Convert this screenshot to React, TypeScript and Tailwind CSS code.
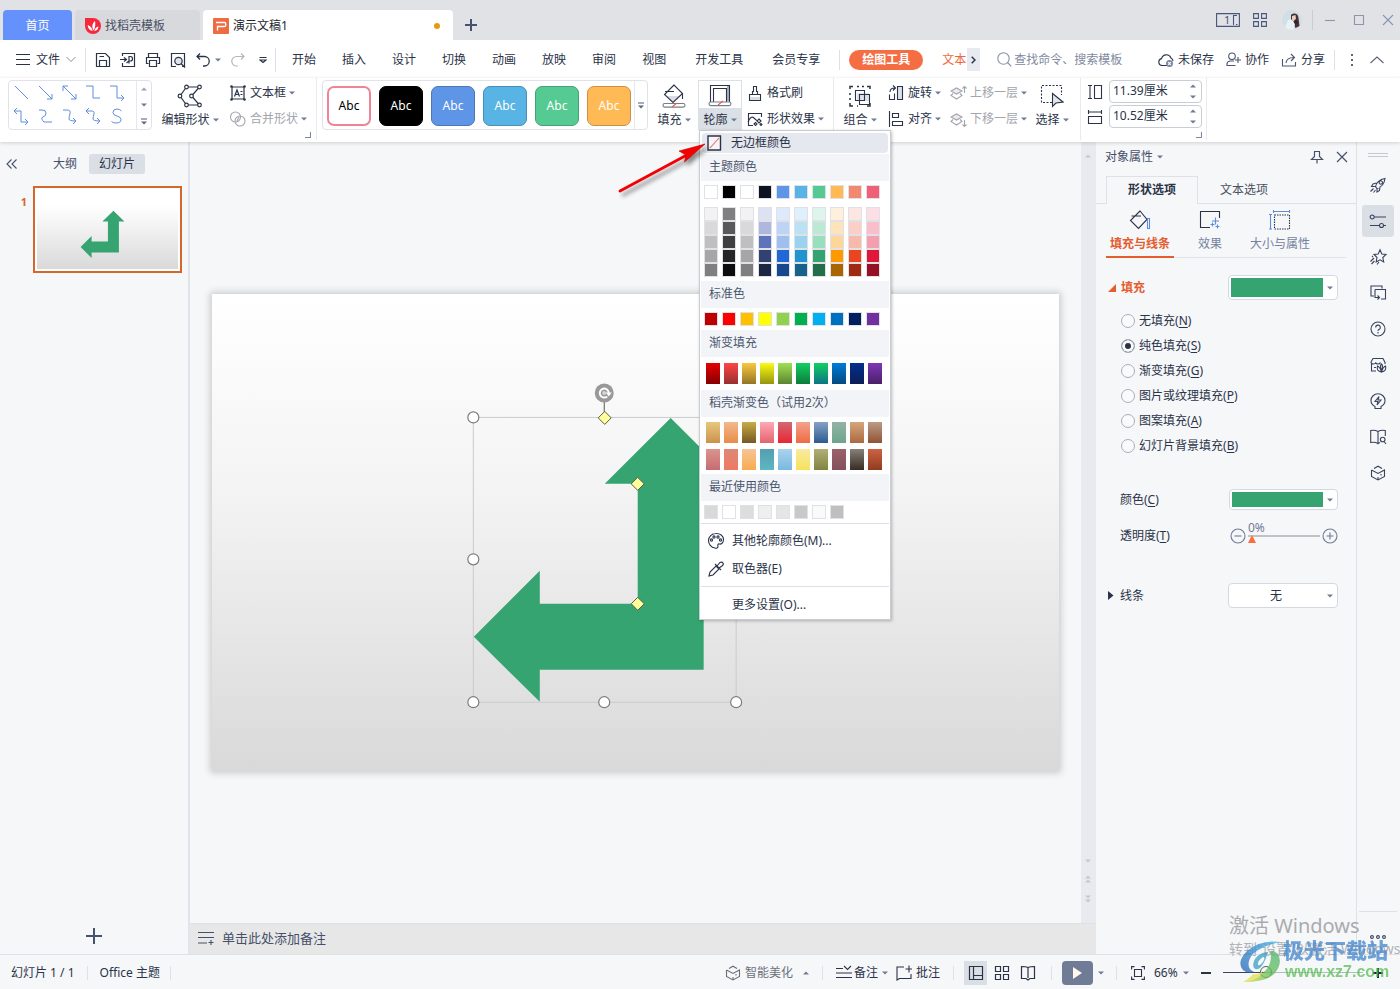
import React from "react";

type Kids = { children?: React.ReactNode };

function Ico({ w = 16, h = 16, sw = 1.1, className = "", children }: Kids & { w?: number; h?: number; sw?: number; className?: string }) {
  return (
    <svg width={w} height={h} viewBox={`0 0 ${w} ${h}`} fill="none" stroke="currentColor" strokeWidth={sw} className={`shrink-0 ${className}`} aria-hidden="true">
      {children}
    </svg>
  );
}

function Caret({ up = false, className = "text-[#6f7b96]" }: { up?: boolean; className?: string }) {
  return (
    <svg width="6" height="4" viewBox="0 0 6 4" className={`shrink-0 ${className}`} aria-hidden="true">
      <path d={up ? "M0 3.5L3 .5L6 3.5Z" : "M0 .5H6L3 3.5Z"} fill="currentColor" />
    </svg>
  );
}

const ARROW = "M459 124L393 190H426V310H328V277L262 343L328 408V376H492V190H525Z";

/* ---------- title bar ---------- */

function TitleBar() {
  return (
    <header className="flex h-10 shrink-0 items-end bg-[#e1e2e6] pl-[3px]">
      <button className="h-[30px] w-[69px] rounded-t bg-[#6591fc] pt-px text-white">首页</button>
      <button className="ml-[3px] flex h-[30px] w-[125px] items-center gap-1 rounded-t bg-[#d8d9dd] pt-px pl-[10px] text-[#4a5064]">
        <svg width="16" height="16" viewBox="0 0 16 16" className="shrink-0" aria-hidden="true">
          <path d="M0 0H8A8 8 0 1 1 0 8Z" fill="#f5283c" />
          <path d="M8.6 12.5C6.5 9.5 7 5.500 10 3C10.600 6 10.400 9.500 8.600 12.500Z" fill="#fff" />
          <path d="M7.600 13C4.500 12.500 2.700 10.200 2.700 7C5.500 8 7.200 10 7.600 13ZM9.200 13C9.800 10.500 11.300 9 13.500 8.400C13.300 11 11.800 12.600 9.200 13Z" fill="#fff" />
        </svg>
        找稻壳模板
      </button>
      <button className="ml-[3px] flex h-[30px] w-[250px] items-center gap-1 rounded-t bg-white pt-px pr-[13px] pl-[10px] text-[#23262e]">
        <svg width="16" height="16" viewBox="0 0 16 16" className="shrink-0" aria-hidden="true">
          <rect width="16" height="16" rx="1" fill="#ee6c43" />
          <path d="M3 4.500H11.500Q12.800 4.500 12.800 6V7Q12.800 8.500 11.500 8.500H4.500V12.500" fill="none" stroke="#fff" strokeWidth="1.3" />
        </svg>
        演示文稿1
        <span className="ml-auto size-[6px] rounded-full bg-[#e69a0c]" />
      </button>
      <button aria-label="新建" className="flex h-[30px] w-9 items-center justify-center text-[#46536f]">
        <Ico w={12} h={12} sw={2}><path d="M6 0V12M0 6H12" /></Ico>
      </button>
      <div className="ml-auto flex h-10 items-center pr-[6px] text-[#47567a]">
        <button aria-label="窗口布局" className="mr-[13px]">
          <Ico w={24} h={14}>
            <path d="M.6.6H23.400V13.400H.600ZM17.500 2.500V11.500M17 2.500H21M17 11.500H18M20 11.500H21.500" />
            <text x="8" y="11" fontSize="11" fill="currentColor" stroke="none">1</text>
          </Ico>
        </button>
        <button aria-label="应用" className="mr-[15px]">
          <Ico w={14} h={14}><path d="M.6.6H5.400V5.400H.600ZM8.600.6H13.400V5.400H8.600ZM.6 8.600H5.400V13.400H.600ZM8.600 8.600H13.400V13.400H8.600Z" /></Ico>
        </button>
        <button aria-label="账户" className="mr-[10px]">
          <svg width="20" height="20" viewBox="0 0 20 20" aria-hidden="true">
            <circle cx="10" cy="10" r="10" fill="#cfdfe6" />
            <path d="M9 5C11 2.500 16.500 3 16.500 8L17.500 16L13.500 18L9 10Z" fill="#4a3035" />
            <path d="M10 6L13.500 5L14 9.500L11.500 11.500L10 9.500Z" fill="#f0cdb9" />
            <path d="M3 17L6 10L10 9.500L13 14L12 19.500C9 20.500 6 20 3 17Z" fill="#e6f2f4" />
            <path d="M13 9L16 12L13.500 15L12 12Z" fill="#2b2633" />
          </svg>
        </button>
        <span className="mr-[11px] h-5 w-px bg-[#c9ccd4]" />
        <div className="flex gap-[17px] text-[#8a95b0]">
          <button aria-label="最小化"><Ico w={12} h={12}><path d="M1 6.500H11" /></Ico></button>
          <button aria-label="最大化"><Ico w={12} h={12}><path d="M1.500 1.500H10.500V10.500H1.500Z" /></Ico></button>
          <button aria-label="关闭"><Ico w={12} h={12}><path d="M1 1L11 11M11 1L1 11" /></Ico></button>
        </div>
      </div>
    </header>
  );
}

/* ---------- menu row ---------- */

function Quick({ label, children }: Kids & { label: string }) {
  return <button aria-label={label} className="flex h-6 w-[25px] items-center justify-center">{children}</button>;
}

function MenuRow() {
  return (
    <div className="flex h-[38px] shrink-0 items-center bg-white pt-px pr-[15px] text-[#2a3348]">
      <button className="flex items-center gap-[5px] pl-[15px]">
        <Ico><path d="M1 2.500H15M1 7.500H15M1 12.500H15" /></Ico>
        文件
        <Ico w={12} h={7} sw={1} className="text-[#8a8f9c]"><path d="M1.500 1L6 5.500L10.500 1" /></Ico>
      </button>
      <span className="mr-[4px] ml-[8px] h-6 w-px bg-[#dde0e8]" />
      <Quick label="保存"><Ico sw={1.200}><path d="M1.500 1.500H10.500L14.500 5.500V14.500H1.500ZM4.500 14.500V8.500H11.500V14.500M4.500 4.500H9" /></Ico></Quick>
      <Quick label="输出为PDF"><Ico sw={1.200}><path d="M2.500 4V1.500H14.500V14.500H2.500V11M0 7.500H6M4 5.500L6.500 7.500L4 9.500M9 11.500V4.500H10.500Q12.500 4.500 12.500 6.700Q12.500 9 10.500 9H9M6.500 11L9 9" /></Ico></Quick>
      <Quick label="打印"><Ico sw={1.200}><path d="M3.500 5.500V1.500H12.500V5.500M3.500 11.500H1.500V5.500H14.500V11.500H12.500M4.500 8.500H11.500V14.500H4.500Z" /></Ico></Quick>
      <Quick label="打印预览"><Ico sw={1.200}><path d="M6 14.500H1.500V1.500H14.500V14.500H12" /><circle cx="8.500" cy="9" r="3.700" fill="#dfe2e8" /><path d="M11 11.500L15 15.500" /></Ico></Quick>
      <Quick label="撤销"><Ico sw={1.300}><path d="M5 1.500L2 4.500L5 7.500M2 4.500H9.500A4.500 4.500 0 0 1 9.500 14H8" /></Ico></Quick>
      <button aria-label="撤销列表" className="flex h-6 w-[7px] items-center"><Caret /></button>
      <span className="w-[3px]" />
      <Quick label="恢复"><Ico sw={1.200} className="text-[#b3b6bd]"><path d="M11 1.500L14 4.500L11 7.500M14 4.500H6.500A4.500 4.500 0 0 0 6.500 14H8" /></Ico></Quick>
      <Quick label="自定义快速访问"><Ico w={8} h={8}><path d="M.5 1.500H7.500M1 4L4 6.500L7 4Z" /></Ico></Quick>
      <span className="h-6 w-px bg-[#dde0e8]" />
      <nav className="flex gap-[26px] pl-4">
        {["开始", "插入", "设计", "切换", "动画", "放映", "审阅", "视图"].map((t) => (
          <button key={t} className="whitespace-nowrap">{t}</button>
        ))}
        <span className="flex gap-[29px] pl-[3px]">
          <button className="whitespace-nowrap">开发工具</button>
          <button className="whitespace-nowrap">会员专享</button>
        </span>
      </nav>
      <span className="mr-[9px] ml-[19px] h-5 w-px bg-[#dde0e8]" />
      <button className="h-5 rounded-full bg-[#f56d43] px-[13px] font-bold whitespace-nowrap text-white">绘图工具</button>
      <button className="ml-[19px] whitespace-nowrap text-[#f0653a]">文本</button>
      <button aria-label="更多选项卡" className="ml-px flex h-[23px] w-[13px] items-center justify-center bg-[#e7eaf0]">
        <Ico w={5} h={8} sw={1.500}><path d="M.7.7L4 4L.7 7.300" /></Ico>
      </button>
      <label className="ml-[17px] flex min-w-0 flex-1 items-center gap-[2px] text-[#8791a8]">
        <Ico w={15} h={15}><circle cx="6.500" cy="6.500" r="5.700" /><path d="M10.500 10.500L14.300 14.300" /></Ico>
        <input aria-label="搜索" placeholder="查找命令、搜索模板" className="w-full min-w-0 bg-transparent outline-none placeholder:text-[#7f89a0]" />
      </label>
      <div className="flex shrink-0 items-center gap-3">
        <button className="flex items-center gap-1">
          <Ico><path d="M9 13.500H4A3.500 3.500 0 0 1 3.500 6.600A5 5 0 0 1 13 6A3.500 3.500 0 0 1 15 9" /><circle cx="11.500" cy="11.500" r="3.500" fill="#7c88a5" stroke="none" /><path d="M10.200 10.200L12.800 12.800M12.800 10.200L10.200 12.800" stroke="#fff" /></Ico>
          未保存
        </button>
        <button className="flex items-center gap-1">
          <Ico w={15} h={15} className="text-[#4a5671]"><circle cx="6" cy="4.300" r="3.300" /><path d="M9.500 13.500H1V12Q1 9.500 4 9H8M12 5V11M9 8H15" /></Ico>
          协作
        </button>
        <button className="flex items-center gap-1">
          <Ico className="text-[#4a5671]"><path d="M1.500 7V14H14.500V10M5 11Q5.500 5.500 13 5.500M10 2L13.500 5.500L10 9" /></Ico>
          分享
        </button>
      </div>
      <span className="ml-[9px] h-5 w-px bg-[#dde0e8]" />
      <button aria-label="更多" className="flex w-[34px] justify-center text-[#5c6475]"><Ico w={2} h={14}><path d="M0 2H2M0 7H2M0 12H2" strokeWidth="2" /></Ico></button>
      <button aria-label="收起功能区"><Ico w={16} h={8} className="text-[#5c6475]"><path d="M1.500 7L8 1L14.500 7" /></Ico></button>
    </div>
  );
}

/* ---------- ribbon ---------- */

const LINES = [
  "M2 2L15 15", "M2 2L15 15M15 10V15H10", "M2 2L15 15M15 10V15H10M2 7V2H7", "M1 2H8V14H15", "M1 2H8V14H15M12 11L15 14L12 17",
  "M1 3H8V14H15M12 11L15 14L12 17M4 0L1 3L4 6", "M2 2H5Q9 2 9 5T6 9T7 14H15", "M2 2H6Q10 2 9 5.500T8 11Q8 13 15 13M12 10L15 13L12 16",
  "M2 3H6Q10 3 9 6T8 11Q8 13 15 13M12 10L15 13L12 16M4 0L1 3L4 6", "M12.500 3Q11 1 8 1Q4 1 4 4.500Q4 7 8 8T12 11.500Q12 15 7 15Q4 15 2.500 13.500",
];

const STYLES = [
  "border-2 border-[#ef8496] bg-white text-black",
  "border border-black bg-black text-white",
  "border border-[#4b76b8] bg-[#5f95e6] text-white",
  "border border-[#468fb5] bg-[#57b4e4] text-white",
  "border border-[#46a276] bg-[#56ca93] text-white",
  "border border-[#c99148] bg-[#ffba55] text-white",
];

function Divider() {
  return <span className="h-[62px] w-px shrink-0 bg-[#e8eaee]" />;
}

function Big({ icon, label, className = "" }: { icon: React.ReactNode; label: string; className?: string }) {
  return (
    <button className={`mt-[2px] flex h-[50px] shrink-0 flex-col items-center ${className}`}>
      <span className="flex h-[31px] items-center">{icon}</span>
      <span className="flex h-[18px] items-center gap-[3px] whitespace-nowrap">{label}<Caret /></span>
    </button>
  );
}

function Small({ icon, label, muted, caret = true }: { icon: React.ReactNode; label: string; muted?: boolean; caret?: boolean }) {
  return (
    <button className={`flex h-[26px] items-center gap-1 whitespace-nowrap ${muted ? "text-[#a3a6ad]" : ""}`}>
      <span className="flex w-4 justify-center">{icon}</span>
      <span className="flex items-center gap-[3px]">{label}{caret && <Caret />}</span>
    </button>
  );
}

function Corner() {
  return <Ico w={6} h={6} className="text-[#7d879e]"><path d="M5.500 0V5.500H0" /></Ico>;
}

function Layers({ down = false }: { down?: boolean }) {
  return (
    <Ico w={17} h={17}>
      <path d="M1 6L6.500 3L12 6L6.500 9Z" fill="#ececee" />
      <path d="M3 8.500L1 10.500L6.500 14L12 10.500L10 8.500" />
      <path d={down ? "M14.500 9V15.500M12.500 13.500L14.500 15.500L16.500 13.500" : "M14.500 8V1.500M12.500 3.500L14.500 1.500L16.500 3.500"} />
    </Ico>
  );
}

function SizeField({ label, value, icon }: { label: string; value: string; icon: React.ReactNode }) {
  return (
    <label className="flex items-center gap-[6px]">
      <span className="flex w-4 justify-center">{icon}</span>
      <span className="flex h-[23px] w-[93px] items-center rounded-sm border border-[#c9cdd6] bg-white pr-[5px] pl-[3px]">
        <input aria-label={label} defaultValue={value} className="h-[18px] w-full min-w-0 bg-transparent pb-px text-[12px] outline-none" />
        <span className="flex flex-col gap-[7px]"><Caret up /><Caret /></span>
      </span>
    </label>
  );
}

function Bucket() {
  return (
    <Ico w={24} h={24}>
      <path d="M5 12L11.500 18L18 12Z" fill="#d9dce2" stroke="none" />
      <path d="M12 1L2.500 10.500L11 18.500L20.500 9.500ZM3 7.500H12M20.500 9.500V15" />
      <rect x="1" y="19.500" width="22" height="3.600" rx="1.800" stroke="#777c88" />
      <path d="M10 23L15 19" stroke="#ec5a50" />
    </Ico>
  );
}

function Ribbon() {
  return (
    <section className="relative z-20 flex h-16 shrink-0 items-start bg-white pl-2 text-[#2a3348] shadow-[0_1px_4px_rgba(0,0,0,0.16)]">
      <div className="mt-[2px] flex h-[50px] w-36 shrink-0 rounded-sm border border-[#dfe2e8]">
        <div className="grid flex-1 grid-cols-5 place-items-center pr-[6px] text-[#5f8ddb]">
          {LINES.map((d, i) => (
            <button key={i} aria-label={`线条 ${i + 1}`}><Ico w={17} h={18} sw={1}><path d={d} /></Ico></button>
          ))}
        </div>
        <div className="grid w-[15px] grid-rows-3 place-items-center border-l border-[#e6e8ed] text-[#5d6880]">
          <Caret up className="text-[#9aa2b4]" /><Caret />
          <Ico w={6} h={7}><path d="M0 1H6" /><path d="M0 3.500H6L3 6.500Z" fill="currentColor" stroke="none" /></Ico>
        </div>
      </div>
      <Big
        className="w-[76px]"
        label="编辑形状"
        icon={<Ico w={26} h={24} sw={1.200}><path d="M9.500 3H22.500L14.500 12L22.500 21H9.500L3 12Z" />{[[9.500, 3], [22.500, 3], [14.500, 12], [22.500, 21], [9.500, 21], [3, 12]].map(([x, y]) => <circle key={`${x}-${y}`} cx={x} cy={y} r="1.800" fill="#fff" />)}</Ico>}
      />
      <div className="mt-[2px] flex w-[77px] shrink-0 flex-col items-start pl-[2px]">
        <Small label="文本框" icon={<Ico sw={1.200}><path d="M2 2H14V14H2ZM4.500 11.500L7 5L9.500 11.500M5.500 9.500H8.500M10.500 6.500H12.500M10.500 9.500H12.500" />{[1.500, 14.500].map((x) => [1.500, 14.500].map((y) => <circle key={`${x}-${y}`} cx={x} cy={y} r="1.300" fill="#2a3348" stroke="none" />))}</Ico>} />
        <Small muted label="合并形状" icon={<Ico><circle cx="5.500" cy="6" r="5" /><circle cx="10" cy="10" r="5" /><path d="M7 10L9 6" /></Ico>} />
      </div>
      <div className="flex h-[62px] w-[11px] shrink-0 items-end pb-[2px]"><Corner /></div>
      <Divider />
      <div className="mt-[2px] ml-[5px] flex h-[50px] w-[326px] shrink-0 rounded-sm border border-[#dfe2e8]">
        <div className="flex flex-1 items-center gap-2 pt-px pl-1">
          {STYLES.map((c) => (
            <button key={c} className={`h-10 w-11 rounded-[7px] text-xs ${c}`}>Abc</button>
          ))}
        </div>
        <button aria-label="更多样式" className="flex w-[13px] items-center justify-center border-l border-[#e6e8ed] text-[#5d6880]">
          <Ico w={6} h={7}><path d="M0 1H6" /><path d="M0 3.500H6L3 6.500Z" fill="currentColor" stroke="none" /></Ico>
        </button>
      </div>
      <Big className="w-[50px] pl-[2px]" label="填充" icon={<Bucket />} />
      <div className="relative mt-[2px] shrink-0">
        <button className="flex h-[50px] w-11 flex-col items-center border border-b-0 border-[#dbe0e6] bg-[#dbe0e6]">
          <span className="flex h-[27px] w-full items-center justify-center bg-white">
            <Ico w={24} h={24}>
              <path d="M2.500 19V2.500H21.500V19M5.500 19V5.500H18.500V19" />
              <path d="M20 3V18" stroke="#8b919e" strokeWidth="1.500" />
              <rect x="1" y="19" width="22" height="3.600" rx="1.800" fill="#fff" stroke="#777c88" />
              <path d="M10 22L15 18" stroke="#ec5a50" />
            </Ico>
          </span>
          <span className="flex flex-1 items-center gap-[3px] pt-px whitespace-nowrap">轮廓<Caret /></span>
        </button>
        <OutlineMenu />
        <svg width="96" height="60" viewBox="0 0 96 60" className="pointer-events-none absolute top-[58px] -left-[83px] z-40 max-w-none drop-shadow-[3px_4px_2px_rgba(0,0,0,0.45)]" aria-hidden="true">
          <path d="M5 53L70 18" stroke="#f40000" strokeWidth="2.800" strokeLinecap="round" />
          <path d="M90 6L64 13L71 17L69.500 24Z" fill="#f40000" stroke="#c00000" strokeWidth=".6" />
        </svg>
      </div>
      <div className="mt-[2px] flex w-[91px] shrink-0 flex-col items-start pl-[5px]">
        <Small caret={false} label="格式刷" icon={<Ico><path d="M2.500 9.500H13.500V15.500H2.500ZM5.500 9V6.500H6.500V1.500H9.500V6.500H10.500V9" /><path d="M3 12H13V15H3Z" fill="#d9dce2" stroke="none" /></Ico>} />
        <Small label="形状效果" icon={<Ico><path d="M6 14.500H1.500V2.500H14.500V6M1 11Q4 4 7 7T10 9M7 13L8.500 11.500L10 13L8.500 14.500ZM12 8L14 10L12 12L10 10ZM13 13.500L14 12.500L15 13.500L14 14.500Z" /></Ico>} />
      </div>
      <Divider />
      <Big
        className="w-[52px]"
        label="组合"
        icon={<Ico w={22} h={22}><path d="M8 8H20V16H8Z" fill="#dfe2e8" stroke="none" /><path d="M6.500 5.500H15.500V15.500H6.500ZM10.500 9.500H20.500V19.500H10.500Z" /><path d="M1 4V1.500H4M8 1.500H10M13 1.500H15M18 1.500H21V4M1 8V10M1 13V15M1 18V21H4M18 21H21V18M8 21H9" strokeWidth="1.500" /></Ico>}
      />
      <div className="mt-[2px] flex w-[62px] shrink-0 flex-col items-start pl-[2px]">
        <Small label="旋转" icon={<Ico><path d="M9.500 1.500H14.500V14.500H9.500Z" fill="#dfe2e8" /><path d="M6.500 8.500V14.500H1.500V9.500M2 7Q2 3 7 3M5 .5L7.500 3L5 5.500" /></Ico>} />
        <Small label="对齐" icon={<Ico><path d="M1.500 0V16M4.500 2.500H10.500V6.500H4.500ZM4.500 10.500H14.500V14.500H4.500Z" /></Ico>} />
      </div>
      <div className="mt-[2px] flex w-[86px] shrink-0 flex-col items-start pl-[2px]">
        <Small muted label="上移一层" icon={<Layers />} />
        <Small muted label="下移一层" icon={<Layers down />} />
      </div>
      <Big
        className="w-[36px]"
        label="选择"
        icon={<Ico w={24} h={24}><path d="M12 18.500H1.500V1.500H21.500V11" strokeDasharray="2 1.500" /><path d="M12.500 9.500V22.500L16 19L23 18Z" fill="#e3e5ea" /></Ico>}
      />
      <span className="w-[10px] shrink-0" />
      <Divider />
      <div className="mt-[2px] ml-[6px] flex shrink-0 flex-col gap-[2px]">
        <SizeField label="高度" value="11.39厘米" icon={<Ico><path d="M1 1.500H5M3 1.500V14.500M1 14.500H5M7.500 1.500H14.500V14.500H7.500Z" /></Ico>} />
        <SizeField label="宽度" value="10.52厘米" icon={<Ico><path d="M1.500 1V5M1.500 3H14.500M14.500 1V5M1.500 7.500H14.500V14.500H1.500Z" /></Ico>} />
      </div>
      <div className="flex h-[62px] w-0 items-end justify-end pb-[2px]"><Corner /></div>
      <span className="w-[4px]" />
      <Divider />
    </section>
  );
}

/* ---------- outline colour menu ---------- */

const THEME = ["#ffffff", "#000000", "#ffffff", "#0d1321", "#5f95e6", "#57b4e4", "#56ca93", "#ffba55", "#f28870", "#ef5f76"];
const SHADES = [
  ["#f2f2f2", "#7f7f7f", "#f2f2f2", "#dde1f1", "#deeafb", "#ddf0fb", "#ddf5ea", "#fff0dc", "#fde6e1", "#fcdfe4"],
  ["#d9d9d9", "#595959", "#d9d9d9", "#aeb8de", "#bed4f6", "#bbe1f4", "#bbead4", "#ffe3bb", "#fbcfc5", "#f8bfca"],
  ["#bfbfbf", "#3f3f3f", "#bfbfbf", "#5e74ba", "#9fbff0", "#9ad3ef", "#99dfbe", "#ffd699", "#f8b8aa", "#f49fae"],
  ["#a6a6a6", "#262626", "#a6a6a6", "#314171", "#2168d6", "#2195d0", "#35a36f", "#ff9900", "#ea4520", "#e01837"],
  ["#7f7f7f", "#0d0d0d", "#7f7f7f", "#1d2744", "#17478f", "#16638a", "#226e4a", "#aa6500", "#9f2b12", "#951025"],
];
const STANDARD = ["#c00000", "#ff0000", "#ffc000", "#ffff00", "#92d050", "#00b050", "#00b0f0", "#0070c0", "#002060", "#7030a0"];
const GRADIENT = [
  ["#e60000", "#850000"], ["#ff4545", "#973030"], ["#fac83e", "#947526"], ["#fbfb13", "#949410"], ["#9fe052", "#5c8533"],
  ["#12d060", "#0c7c3c"], ["#12d060", "#0c7585"], ["#007bd9", "#064a80"], ["#032f8d", "#0c1d57"], ["#7f36b5", "#4a2069"],
];
const DOCER = [
  [["#e8c77d", "#cb924c"], ["#f2b98d", "#e88b48"], ["#c7ad46", "#765823"], ["#fda9b5", "#e2646d"], ["#d16972", "#ea2534"], ["#f2a28d", "#ee6b43"], ["#86a2c5", "#2b5b91"], ["#94b3a4", "#6ca58e"], ["#d4a77d", "#ad693e"], ["#bb9b86", "#915335"]],
  [["#dc938c", "#c66c73"], ["#df8878", "#ee7964"], ["#f5c598", "#f8ab50"], ["#549eb0", "#5bb8c2"], ["#abd3ee", "#79b9df"], ["#f9eaa0", "#f5e25d"], ["#b2af77", "#828340"], ["#99626b", "#85505c"], ["#858078", "#382c22"], ["#cf6243", "#8f3c20"]],
];
const RECENT = ["#d9d9d9", "#ffffff", "#dddddd", "#efefef", "#e5e5e5", "#c8c8c8", "#fafafa", "#bfbfbf"];

function Head({ children }: Kids) {
  return <h3 className="mx-px flex h-[27px] items-center bg-[#f2f4f7] pb-[2px] pl-2 text-[#4b566e]">{children}</h3>;
}

function Row({ colors }: { colors: string[] }) {
  return (
    <div className="flex gap-1 py-1 pl-1">
      {colors.map((c, i) => (
        <button key={i} aria-label={c} className="size-[14px] border border-[#dfe1e6]" style={{ backgroundColor: c }} />
      ))}
    </div>
  );
}

function Grad({ colors }: { colors: string[][] }) {
  return (
    <div className="flex gap-1 pl-[6px]">
      {colors.map(([a, b], i) => (
        <button key={i} aria-label={`${a} ${b}`} className="h-[21px] w-[14px]" style={{ backgroundImage: `linear-gradient(${a},${b})` }} />
      ))}
    </div>
  );
}

function OutlineMenu() {
  return (
    <div role="menu" className="absolute top-[50px] left-px z-30 flex w-[192px] flex-col border border-[#c9ccd2] bg-white pt-[2px] shadow-[1px_1px_3px_rgba(0,0,0,0.25)]">
      <button className="mx-[2px] mb-px flex h-5 items-center gap-[9px] rounded-sm bg-[#e5e8ee] pl-[5px] text-[#2a3348]">
        <Ico w={15} h={16}><path d="M1 1H13.500V15H1Z" fill="#f5f5f7" strokeWidth="1.400" /><path d="M3 13L12 3" stroke="#ec6a60" /></Ico>
        无边框颜色
      </button>
      <Head>主题颜色</Head>
      <Row colors={THEME} />
      <div className="flex flex-col pt-1 pb-1 pl-1">
        {SHADES.map((r, i) => (
          <div key={i} className="flex gap-1">
            {r.map((c, j) => <button key={j} aria-label={c} className="size-[14px] border border-[#dfe1e6]" style={{ backgroundColor: c }} />)}
          </div>
        ))}
      </div>
      <Head>标准色</Head>
      <Row colors={STANDARD} />
      <Head>渐变填充</Head>
      <div className="py-[6px]"><Grad colors={GRADIENT} /></div>
      <Head>稻壳渐变色（试用2次）</Head>
      <div className="flex flex-col gap-[6px] pt-[5px] pb-1"><Grad colors={DOCER[0]} /><Grad colors={DOCER[1]} /></div>
      <Head>最近使用颜色</Head>
      <Row colors={RECENT} />
      <div className="mx-px border-t border-[#dcdfe5] py-[3px] text-[#2a3348]">
        <button className="flex h-7 w-full items-center gap-[7px] pl-[6px]">
          <Ico w={18} h={18}><path d="M8.500 1.500C13 1 16.500 4 16.500 7.500C16.500 11 14 12.500 12.500 12C11 11.500 10.500 13 11 14.500C11 16 9.500 16.500 8 16C4 15.500 1.500 12 1.500 8.500C1.500 5 5 1.500 8.500 1.500Z" /><circle cx="4.500" cy="8" r="1.100" /><circle cx="7" cy="5" r="1.100" /><circle cx="11" cy="5" r="1.100" /><circle cx="13.500" cy="8" r="1.100" /></Ico>
          其他轮廓颜色(M)...
        </button>
        <button className="flex h-7 w-full items-center gap-[7px] pl-[6px]">
          <Ico w={18} h={18}><path d="M2 16L3 12L9 6L12 9L6 15ZM8 4L14 10M10 6L13 2.500Q15 1.500 16 3T15 6L12 8" /></Ico>
          取色器(E)
        </button>
      </div>
      <div className="mx-px border-t border-[#dcdfe5] pt-1 text-[#2a3348]">
        <button className="flex h-[28px] w-full items-center pl-[31px]">更多设置(O)...</button>
      </div>
    </div>
  );
}

/* ---------- left panel ---------- */

function SlidePanel() {
  return (
    <aside className="flex w-[190px] shrink-0 flex-col border-r-2 border-[#e2e4ec] bg-[#f6f7f9]">
      <div className="flex h-11 items-center text-[#46506a]">
        <button aria-label="收起" className="ml-[6px] w-[47px]"><Ico w={12} h={10}><path d="M5.500.5L1 5L5.500 9.500M10.500.5L6 5L10.500 9.500" /></Ico></button>
        <button>大纲</button>
        <button className="ml-3 h-5 w-14 rounded-[3px] bg-[#dadfe6] text-[#2a3348]">幻灯片</button>
      </div>
      <div className="flex items-start">
        <span className="w-[33px] pt-[7px] pr-[6px] text-right text-[11px] font-bold text-[#d4682c]">1</span>
        <button aria-label="幻灯片 1" className="w-[149px] border-2 border-[#d4682c] bg-white p-[2px]">
          <svg viewBox="0 0 847 477" className="block w-full bg-linear-to-b from-white from-20% to-[#d9d9d9]" aria-hidden="true"><path d={ARROW} fill="#35a471" /></svg>
        </button>
      </div>
      <button aria-label="新建幻灯片" className="mt-auto mb-[10px] self-center text-[#46536f]"><Ico sw={2}><path d="M8 0V16M0 8H16" /></Ico></button>
    </aside>
  );
}

/* ---------- canvas ---------- */

const HANDLES = [[261, 123], [261, 265], [261, 408], [392, 408], [524, 408], [524, 265]];
const DIAMONDS = [[393, 124], [426, 190], [426, 310]];

function Canvas() {
  return (
    <main className="flex min-w-0 flex-1 flex-col">
      <div className="flex min-h-0 flex-1">
        <div className="flex min-w-0 flex-1 items-center justify-center bg-[#f6f7f9]">
          <div className="w-[95%] bg-linear-to-b from-white from-0% via-[#f4f4f4] via-40% to-[#d9d9d9] shadow-[0_0_7px_2px_rgba(0,0,0,0.18)]">
            <svg viewBox="0 0 847 477" className="block w-full overflow-visible">
              <path d={ARROW} fill="#35a471" />
              <rect x="261.500" y="123.500" width="263" height="285" fill="none" stroke="#c9cbcf" />
              <path d="M392.500 108V120" stroke="#555" />
              <circle cx="392.500" cy="99" r="9.500" fill="#999" />
              <path d="M395.500 102.500A4.500 4.500 0 1 1 397 99" fill="none" stroke="#fff" strokeWidth="2" />
              <path d="M394 98.500H400L397 102.500Z" fill="#fff" />
              <circle cx="392.500" cy="99" r="2" fill="#fff" opacity=".6" />
              {HANDLES.map(([x, y]) => <circle key={`${x}-${y}`} cx={x + 0.5} cy={y + 0.5} r="5.500" fill="#fff" stroke="#7d7d7d" strokeWidth="1.200" />)}
              {DIAMONDS.map(([x, y]) => <path key={`${x}-${y}`} d={`M${x} ${y - 6.5}l6.500 6.500l-6.500 6.500l-6.500-6.500Z`} fill="#ffff99" stroke="#5a5a4a" />)}
            </svg>
          </div>
        </div>
        <div className="flex w-[15px] shrink-0 flex-col items-center bg-[#e9eaef] pt-3 pr-px pb-5">
          <Caret up className="text-[#c3c7d2]" />
          <div className="mt-auto flex flex-col items-center gap-[12px] text-[#c3c7d2]">
            <Caret className="text-[#c3c7d2]" />
            <Ico w={6} h={8}><path d="M0 3.500L3 .5L6 3.500ZM0 7.500L3 4.500L6 7.500Z" fill="currentColor" stroke="none" /></Ico>
            <Ico w={6} h={8}><path d="M0 .5L3 3.500L6 .5ZM0 4.500L3 7.500L6 4.500Z" fill="currentColor" stroke="none" /></Ico>
          </div>
        </div>
      </div>
      <label className="flex h-[31px] shrink-0 items-center gap-2 border-t border-[#dfe1e8] bg-[#e7e7e7] pb-[2px] pl-2 text-[#46506a]">
        <Ico><path d="M0 2.500H16M0 7.500H16M0 13H9M10.500 12.500H15.500M13 10V15" /></Ico>
        <input aria-label="备注" placeholder="单击此处添加备注" className="flex-1 bg-transparent text-[13px] outline-none placeholder:text-[#46506a]" />
      </label>
    </main>
  );
}

/* ---------- properties panel ---------- */

const FILLS = [["无填充", "N"], ["纯色填充", "S"], ["渐变填充", "G"], ["图片或纹理填充", "P"], ["图案填充", "A"], ["幻灯片背景填充", "B"]];

function ColorField({ label, className }: { label: string; className: string }) {
  return (
    <button aria-label={label} className={`flex items-center gap-1 rounded-sm border border-[#d5d8e0] bg-white pr-[4px] pl-[2px] ${className}`}>
      <span className="my-[2px] flex-1 self-stretch bg-[#35a471]" /><Caret />
    </button>
  );
}

function Properties() {
  return (
    <aside className="flex w-[261px] shrink-0 flex-col border-r border-[#dfe1e6] bg-[#f6f7f9] text-[#2a3348]">
      <div className="flex h-[30px] items-center pr-2 pl-[9px] text-[#46506a]">
        <button className="flex items-center gap-1">对象属性<Caret /></button>
        <button aria-label="固定" className="mr-3 ml-auto"><Ico w={14} h={14} sw={1.200}><path d="M4 1.500H10M4.500 1.500V6.500L1.500 9.500H12.500L9.500 6.500V1.500M7 10V13.500" /></Ico></button>
        <button aria-label="关闭面板"><Ico w={12} h={12} sw={1.200}><path d="M1 1L11 11M11 1L1 11" /></Ico></button>
      </div>
      <div className="flex h-[32px] items-end">
        <span className="h-px w-[10px] bg-[#dfe1e6]" />
        <button className="h-7 w-[92px] border border-b-0 border-[#dfe1e6] pb-px font-bold">形状选项</button>
        <div className="h-7 flex-1 border-b border-[#dfe1e6]"><button className="h-full w-[92px] text-[#4b5161]">文本选项</button></div>
      </div>
      <div className="mr-[10px] ml-[10px] flex h-[54px] border-b border-[#e1e3e8] text-[#7582a0]">
        <button className="flex h-[54px] w-[68px] flex-col items-center border-b-2 border-[#e55c2f] pt-[6px] font-bold text-[#e55c2f]">
          <Ico w={22} h={20} className="text-[#2a3348]"><path d="M11 1L1.500 10.500L9.500 18.500L18 9.500ZM2.500 6H12" /><path d="M18.500 8.500H20.500V18.500H18.500Z" stroke="#5f8ddb" fill="#f6f7f9" /></Ico>
          <span className="mt-[5px]">填充与线条</span>
        </button>
        <button className="flex w-[72px] flex-col items-center pt-[6px]">
          <Ico w={22} h={20} className="text-[#2a3348]"><path d="M11 17.500H1.500V1.500H20.500V8" /><path d="M16.500 7.500V14.500M13 11H20M13.500 12.500V16.500M11.500 14.500H15.500M18.500 14.500V18.500M16.500 16.500H20.500" stroke="#5f8ddb" /></Ico>
          <span className="mt-[5px]">效果</span>
        </button>
        <button className="flex w-[68px] flex-col items-center pt-[6px]">
          <Ico w={22} h={20} className="text-[#2a3348]"><path d="M5.500 5H20.500V19H5.500Z" strokeDasharray="1.500 1" /><path d="M4.500 0V3M4.500 1.500H20.500M20.500 0V3M0 4.500H3M1.500 4.500V19M0 19H3" stroke="#5f8ddb" /></Ico>
          <span className="mt-[5px] whitespace-nowrap">大小与属性</span>
        </button>
      </div>
      <div className="mt-[17px] mr-[18px] flex h-[25px] items-center pl-3">
        <button className="flex items-center gap-[5px] font-bold text-[#e55c2f]"><Ico w={8} h={8}><path d="M8 0V8H0Z" fill="currentColor" stroke="none" /></Ico>填充</button>
        <ColorField label="填充颜色" className="ml-auto h-[25px] w-[110px]" />
      </div>
      <div className="mt-[8px] flex flex-col pl-[25px]">
        {FILLS.map(([t, k]) => (
          <label key={k} className="flex h-[25px] items-center gap-1">
            <input type="radio" name="fill" defaultChecked={k === "S"} className="size-[14px] appearance-none rounded-full border border-[#a9aeb9] bg-[#f9fafb] checked:bg-[#2a3348] checked:shadow-[inset_0_0_0_3px_#f9fafb]" />
            <span>{t}(<u className="underline-offset-2">{k}</u>)</span>
          </label>
        ))}
      </div>
      <div className="mt-[31px] mr-[18px] flex h-[21px] items-center justify-between pl-6">
        <span>颜色(<u className="underline-offset-2">C</u>)</span>
        <ColorField label="颜色" className="h-[21px] w-[109px]" />
      </div>
      <div className="mt-4 mr-[18px] flex h-[20px] items-center pl-6">
        <label htmlFor="alpha">透明度(<u className="underline-offset-2">T</u>)</label>
        <div className="ml-auto flex items-center gap-[2px] text-[#6f7b96]">
          <button aria-label="减小"><Ico><circle cx="8" cy="8" r="7" /><path d="M4.500 8H11.500" /></Ico></button>
          <div className="relative flex w-[72px]">
            <span className="absolute -top-2 left-0 leading-4">0%</span>
            <input
              id="alpha"
              type="range"
              defaultValue={0}
              className="h-4 w-full appearance-none bg-transparent [&::-webkit-slider-runnable-track]:h-[2px] [&::-webkit-slider-runnable-track]:bg-[#bfc2c9] [&::-webkit-slider-thumb]:size-2 [&::-webkit-slider-thumb]:appearance-none [&::-webkit-slider-thumb]:bg-[#fb6e3f] [&::-webkit-slider-thumb]:[clip-path:polygon(50%_0,100%_100%,0_100%)]"
            />
          </div>
          <button aria-label="增大"><Ico><circle cx="8" cy="8" r="7" /><path d="M4.500 8H11.500M8 4.500V11.500" /></Ico></button>
        </div>
      </div>
      <div className="mt-[37px] mr-[18px] flex h-[25px] items-center pl-3">
        <button className="flex items-center gap-[6px]"><Ico w={6} h={9}><path d="M0 0L5.500 4.500L0 9Z" fill="currentColor" stroke="none" /></Ico>线条</button>
        <div className="relative ml-auto">
          <select aria-label="线条" className="h-[25px] w-[110px] appearance-none rounded-sm border border-[#d5d8e0] bg-white pr-[14px] text-center outline-none"><option>无</option></select>
          <span className="pointer-events-none absolute inset-y-0 right-[5px] flex items-center"><Caret /></span>
        </div>
      </div>
    </aside>
  );
}

/* ---------- right rail ---------- */

function Cube() {
  return <path d="M4 3.500L8 1.200L12 3.500M1.500 5V11.500L8 15L14.500 11.500V5L8 8.500L1.500 5M8 12V15M11 9V10.500" />;
}

const RAIL: [string, React.ReactNode][] = [
  ["快捷", <path d="M5.500 9.500Q7 3 15 1.500Q14 9.500 7 11.500ZM6.500 6L3 7L1.500 9.500L5 9.500M10 9.500L9.500 13.500L7 15V11.500M3.500 11.500L.5 14.500M5.500 13L3.500 15.500M12.500 5.500A1.700 1.700 0 1 0 9.100 5.500A1.700 1.700 0 1 0 12.500 5.500" />],
  ["属性", <path d="M4.500 4H16M0 12.500H9.500M4.200 4A2 2 0 1 0 .2 4A2 2 0 1 0 4.200 4M13.500 12.500A2 2 0 1 0 9.500 12.500A2 2 0 1 0 13.500 12.500M13.500 12.500H16" />],
  ["动画", <path d="M10 .8L11.800 5L16 5.500L12.800 8.500L13.700 13L10 10.800L6.200 13L7 8.500L4 5.500L8.200 5ZM4 9L.5 12.500M4.500 12L1.500 15M9 13L7 15.500M3 7L2 8" />],
  ["切换", <path d="M12 3.500V1H1V11H4M5 4.500H15.500V14H11M5 4.500V12.500H9M7.500 10.500L9.500 12.500L7.500 14.500" />],
  ["帮助", <><circle cx="8" cy="8" r="7" /><path d="M5.700 6.500A2.300 2.300 0 1 1 8.500 8.700Q8 9 8 10M8 11V12.500" /></>],
  ["稻壳", <><path d="M1.500 7V14H6M1 5L3 1.500H13L15 5.500V7M1 5Q1 7 3.300 7T5.500 5.500Q6 7 8 7T10.500 5.500M4 10.500H6" /><path d="M11.500 15Q6 14 7.500 9Q10 10 11.500 15ZM11.500 15Q17 14 15.500 9Q13 10 11.500 15ZM11.500 13Q9.500 9 11.500 7Q13.500 9 11.500 13" /></>],
  ["灵感", <path d="M5 13.500Q1 11.500 1 7.500A7 6.700 0 0 1 15 7.500Q15 11.500 11 13.500V15.500H5ZM9 3.500L5 8.500H8L7 12L11 7H8Z" />],
  ["阅读", <path d="M8 2.500Q5 .8 .7 1.500V13.500Q5 12.800 8 14.500M8 2.500Q11 .8 15.300 1.500V7M8 2.500V14.500L10 13.500M15 10.500A2.300 2.300 0 1 0 10.400 10.500A2.300 2.300 0 1 0 15 10.500M14 12.500L16 15" />],
  ["智能美化", <Cube />],
];

function Rail() {
  return (
    <aside className="flex w-[43px] shrink-0 flex-col items-center bg-[#f6f7f9] pr-px text-[#39435c]">
      <span className="mt-[11px] mb-3 h-1 w-5 border-y border-[#c5c8d0]" />
      {RAIL.map(([name, d]) => (
        <button key={name} aria-label={name} className={`mb-1 flex size-8 items-center justify-center rounded-[3px] ${name === "属性" ? "bg-[#dadfe6]" : ""}`}>
          <Ico className="overflow-visible">{d}</Ico>
        </button>
      ))}
      <span className="mt-auto h-px w-[38px] bg-[#dfe1e6]" />
      <button aria-label="更多工具" className="flex h-[42px] items-center pt-2"><Ico w={16} h={4}><circle cx="2" cy="2" r="1.400" /><circle cx="8" cy="2" r="1.400" /><circle cx="14" cy="2" r="1.400" /></Ico></button>
    </aside>
  );
}

/* ---------- status bar ---------- */

function StatusBar() {
  return (
    <footer className="flex h-[35px] shrink-0 items-center border-t border-[#dfe1e8] bg-[#f6f7f9] pt-px pr-[17px] pl-[11px] text-[#2a3348]">
      <span>幻灯片 1 / 1</span>
      <span className="mx-[12px] h-[14px] w-px bg-[#dfe1e8]" />
      <span>Office 主题</span>
      <span className="mx-[10px] h-[14px] w-px bg-[#dfe1e8]" />
      <button className="mr-[13px] ml-auto flex items-center gap-1 text-[#6a6f7a]">
        <Ico><Cube /></Ico>智能美化<span className="ml-[6px] flex"><Caret up /></span>
      </button>
      <span className="mr-3 h-[14px] w-px bg-[#dfe1e8]" />
      <button className="mr-2 flex items-center gap-[2px]"><Ico w={17} h={16}><path d="M1 3.500H8M1 8H17M1 12.500H17M9 1L12.500 4.500L16 1" /></Ico>备注<span className="ml-[2px] flex"><Caret /></span></button>
      <button className="flex items-center gap-1"><Ico><path d="M8 2H1V15L3.500 13.500H15V9M13 .5V7.500M9.500 4H16" /></Ico>批注</button>
      <span className="mr-[10px] ml-[13px] h-[14px] w-px bg-[#dfe1e8]" />
      <button aria-label="普通视图" className="flex h-6 w-[23px] items-center justify-center bg-[#dadfe6]"><Ico sw={1.200}><path d="M1.500 1.500H14.500V14.500H1.500ZM5.500 1.500V14.500M5.500 10.500H14.500" /></Ico></button>
      <button aria-label="幻灯片浏览" className="ml-[7px]"><Ico sw={1.200}><path d="M1.500 1.500H6.500V6.500H1.500ZM9.500 1.500H14.500V6.500H9.500ZM1.500 9.500H6.500V14.500H1.500ZM9.500 9.500H14.500V14.500H9.500Z" /></Ico></button>
      <button aria-label="阅读视图" className="mr-[15px] ml-[10px]"><Ico sw={1.200}><path d="M8 2.500Q6 1.500 1.500 1.500V13.500H6L8 15L10 13.500H14.500V1.500Q10 1.500 8 2.500V13" /></Ico></button>
      <span className="mr-[10px] h-[14px] w-px bg-[#dfe1e8]" />
      <button aria-label="放映" className="flex h-6 w-[31px] items-center justify-center rounded-sm bg-[#707b96]"><svg width="9" height="12" viewBox="0 0 9 12" aria-hidden="true"><path d="M0 0L9 6L0 12Z" fill="#fff8ee" /></svg></button>
      <button aria-label="放映选项" className="ml-[5px]"><Caret /></button>
      <span className="mr-[14px] ml-3 h-[14px] w-px bg-[#dfe1e8]" />
      <button aria-label="适应窗口"><Ico w={14} h={14}><path d="M.6 3.500V.6H3.500M10.500.6H13.400V3.500M13.400 10.500V13.400H10.500M3.500 13.400H.6V10.500M3.500 3.500H10.500V10.500H3.500Z" /></Ico></button>
      <button className="ml-[9px] flex w-[35px] items-center justify-between">66%<Caret /></button>
      <button aria-label="缩小" className="mr-3 ml-3"><Ico w={10} h={10} sw={2}><path d="M0 5H10" /></Ico></button>
      <input
        aria-label="缩放"
        type="range"
        defaultValue={29}
        className="h-4 w-[140px] appearance-none bg-transparent [&::-webkit-slider-runnable-track]:h-px [&::-webkit-slider-runnable-track]:bg-linear-to-r [&::-webkit-slider-runnable-track]:from-[#39435c] [&::-webkit-slider-runnable-track]:from-30% [&::-webkit-slider-runnable-track]:to-[#b5bac6] [&::-webkit-slider-runnable-track]:to-30% [&::-webkit-slider-thumb]:-mt-[6px] [&::-webkit-slider-thumb]:size-3 [&::-webkit-slider-thumb]:appearance-none [&::-webkit-slider-thumb]:rounded-full [&::-webkit-slider-thumb]:border [&::-webkit-slider-thumb]:border-[#555c66] [&::-webkit-slider-thumb]:bg-transparent"
      />
      <button aria-label="放大" className="ml-[10px] text-[#13243a]"><Ico w={10} h={10} sw={2}><path d="M0 5H10M5 0V10" /></Ico></button>
    </footer>
  );
}

function Watermarks() {
  return (
    <div className="pointer-events-none absolute right-0 bottom-0 z-30 h-[76px] w-[171px] overflow-hidden whitespace-nowrap">
      <p className="text-[20px] leading-[26px] text-[#a9abae]">激活 Windows</p>
      <p className="text-[14px] leading-[20px] text-[#b0b2b5]">转到“设置”以激活 Windows。</p>
      <div className="absolute bottom-0 left-[10px] flex items-end gap-[2px] opacity-75">
        <svg width="42" height="46" viewBox="0 0 42 46" className="mb-1 shrink-0" aria-hidden="true">
          <defs>
            <linearGradient id="swirl" x1="0" y1="1" x2="1" y2="0"><stop offset="0" stopColor="#d6df4a" /><stop offset=".5" stopColor="#62bd55" /><stop offset="1" stopColor="#4fb574" /></linearGradient>
            <linearGradient id="wave" x1="0" y1="1" x2="1" y2="0"><stop offset="0" stopColor="#2060b4" /><stop offset="1" stopColor="#49b7ea" /></linearGradient>
          </defs>
          <path d="M42 3Q22 0 8 12Q-3 23 4 31Q8 35 15 33Q8 30 10 22Q13 9 42 3Z" fill="url(#wave)" />
          <path d="M31 12Q35 11 39 15Q44 24 36 34Q28 43 4 43Q20 39 27 31Q34 22 31 12Z" fill="url(#swirl)" />
          <path d="M29 13Q21 13 16 20Q13 25 15 29Q18 32 22 28Q26 23 29 13ZM24 18Q26 18 25 21Q22 27 19 26Q18 22 24 18Z" fill="#3aa0c4" fillRule="evenodd" />
          <path d="M14 35Q20 36 25 31L20 38Q14 42 4 43Q11 39 14 35Z" fill="#e6e04b" />
        </svg>
        <div className="pb-2">
          <p className="text-[21px] leading-[25px] font-black text-[#4186cc]">极光下载站</p>
          <p className="pl-[2px] font-['Liberation_Sans'] text-[16px] leading-[18px] font-bold text-[#59bf55]">www.xz7.com</p>
        </div>
      </div>
    </div>
  );
}

export default function App() {
  return (
    <div className="relative flex h-screen flex-col overflow-hidden bg-[#f6f7f9] font-['Noto_Sans','Noto_Sans_CJK_SC',sans-serif] text-[12px] leading-[18px]">
      <TitleBar />
      <MenuRow />
      <Ribbon />
      <div className="flex min-h-0 flex-1">
        <SlidePanel />
        <Canvas />
        <Properties />
        <Rail />
      </div>
      <StatusBar />
      <Watermarks />
    </div>
  );
}
